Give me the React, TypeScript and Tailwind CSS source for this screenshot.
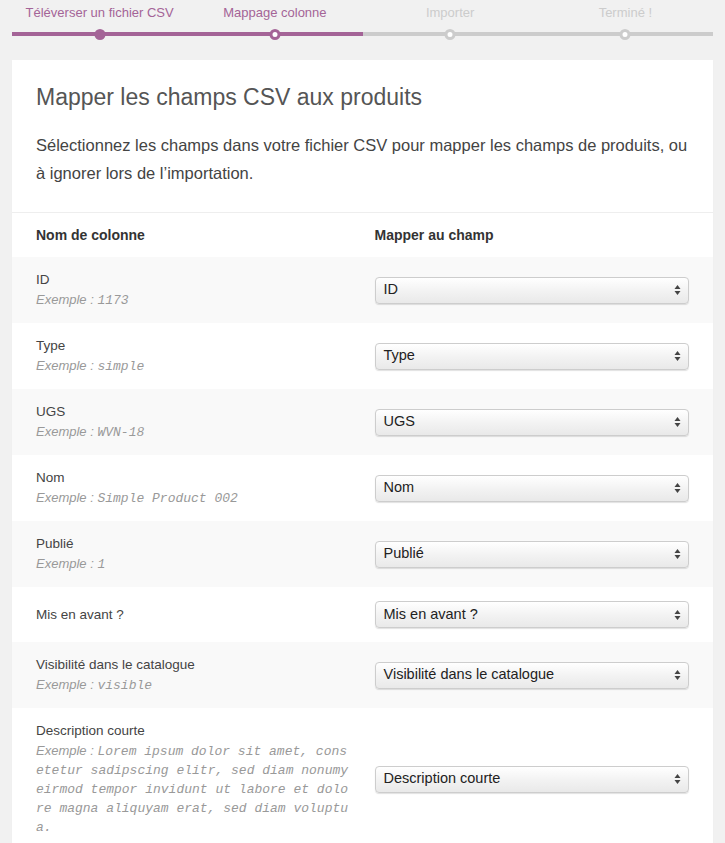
import React from "react";

const steps = [
  { label: "Téléverser un fichier CSV", state: "done" },
  { label: "Mappage colonne", state: "active" },
  { label: "Importer", state: "todo" },
  { label: "Terminé !", state: "todo" },
];

const rows: { name: string; example?: string; field: string }[] = [
  { name: "ID", example: "1173", field: "ID" },
  { name: "Type", example: "simple", field: "Type" },
  { name: "UGS", example: "WVN-18", field: "UGS" },
  { name: "Nom", example: "Simple Product 002", field: "Nom" },
  { name: "Publié", example: "1", field: "Publié" },
  { name: "Mis en avant ?", field: "Mis en avant ?" },
  { name: "Visibilité dans le catalogue", example: "visible", field: "Visibilité dans le catalogue" },
  {
    name: "Description courte",
    example:
      "Lorem ipsum dolor sit amet, consetetur sadipscing elitr, sed diam nonumy eirmod tempor invidunt ut labore et dolore magna aliquyam erat, sed diam voluptua.",
    field: "Description courte",
  },
];

function Stepper() {
  return (
    <ol className="mx-3 flex pt-[5px]">
      {steps.map((step) => {
        const purple = step.state !== "todo";
        return (
          <li
            key={step.label}
            className={
              "relative flex-1 border-b-4 pb-[11px] text-center text-[13px] leading-4 " +
              (purple ? "border-[#a46497] text-[#a46497]" : "border-[#cccccc] text-[#cccccc]")
            }
          >
            {step.label}
            <span
              className={
                "absolute -bottom-[7.5px] left-1/2 h-[11px] w-[11px] -translate-x-1/2 rounded-full " +
                (step.state === "done"
                  ? "bg-[#a46497]"
                  : step.state === "active"
                    ? "border-[3px] border-[#a46497] bg-white"
                    : "border-[3px] border-[#cccccc] bg-white")
              }
            />
          </li>
        );
      })}
    </ol>
  );
}

function FakeSelect({ value }: { value: string }) {
  return (
    <div className="flex h-[27px] items-center justify-between rounded-[4px] border border-[#cdcdcd] bg-linear-to-b from-white via-[#f3f3f3] to-[#e9e9e9] pr-[7px] pl-[8px] text-[14.5px] text-[#222] shadow-[0_1px_1px_rgba(0,0,0,0.12)]">
      <span>{value}</span>
      <svg width="7" height="12" viewBox="0 0 7 12" className="text-[#444]">
        <path d="M3.5 1 L6.5 5 L0.5 5 Z" fill="currentColor" />
        <path d="M3.5 11 L6.5 7 L0.5 7 Z" fill="currentColor" />
      </svg>
    </div>
  );
}

export default function App() {
  return (
    <div className="min-h-screen bg-[#f1f1f1] pb-6 font-['Liberation_Sans',Arial,sans-serif] text-[#444]">
      <Stepper />

      <div className="mx-3 mt-6 bg-white shadow-[0_1px_1px_rgba(0,0,0,0.04)]">
        <header className="border-b border-[#eeeeee] px-6 pt-[23px] pb-[25px]">
          <h2 className="text-[23px] leading-7 font-normal text-[#555]">Mapper les champs CSV aux produits</h2>
          <p className="mt-[20px] text-[16.5px] leading-7 text-[#444]">
            Sélectionnez les champs dans votre fichier CSV pour mapper les champs de produits, ou à ignorer lors de
            l’importation.
          </p>
        </header>

        <div className="grid grid-cols-2 gap-x-6 px-6 py-[14px] text-[14px] leading-4 font-bold text-[#333]">
          <div>Nom de colonne</div>
          <div>Mapper au champ</div>
        </div>

        {rows.map((row, i) => (
          <div
            key={row.name}
            className={
              "grid grid-cols-2 items-center gap-x-6 px-6 py-[14px] " + (i % 2 === 0 ? "bg-[#f9f9f9]" : "bg-white")
            }
          >
            <div className="min-w-0">
              <div className="text-[13.5px] leading-[17px] text-[#444]">{row.name}</div>
              {row.example && (
                <div className="mt-[2px] text-[13px] leading-[19px] break-all text-[#999] italic">
                  Exemple : <code className="font-['Liberation_Mono',monospace] leading-none">{row.example}</code>
                </div>
              )}
            </div>
            <FakeSelect value={row.field} />
          </div>
        ))}
      </div>
    </div>
  );
}
